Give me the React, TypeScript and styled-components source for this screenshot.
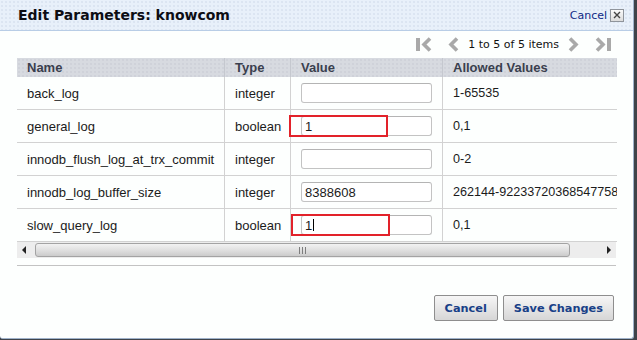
import React from 'react';
import styled, { createGlobalStyle } from 'styled-components';

const GlobalStyle = createGlobalStyle`
  html, body {
    margin: 0;
    padding: 0;
    background: #3f4349;
  }
  body {
    width: 637px;
    height: 340px;
    overflow: hidden;
  }
`;

const Dialog = styled.div`
  width: 634px;
  height: 339px;
  box-sizing: border-box;
  background: #fdfffe;
  border-right: 1px solid #9fb2ca;
  border-bottom: 1px solid #9fb2ca;
  border-bottom-left-radius: 3px;
  border-bottom-right-radius: 3px;
  display: flex;
  flex-direction: column;
  overflow: hidden;
`;

const Header = styled.div`
  height: 31px;
  box-sizing: border-box;
  display: flex;
  align-items: center;
  justify-content: space-between;
  padding: 0 9px 0 18px;
  background-color: #e8f0fa;
  background-image: radial-gradient(#dbe4f1 0.7px, transparent 0.8px);
  background-size: 4px 4px;
  border-bottom: 1px solid #b8cde6;
`;

const Title = styled.div`
  font-family: 'DejaVu Sans', Verdana, sans-serif;
  font-weight: bold;
  font-size: 14px;
  color: #0d0d14;
`;

const HeaderTools = styled.div`
  display: flex;
  align-items: center;
  gap: 3px;
`;

const CancelLink = styled.a`
  font-family: 'DejaVu Sans', Verdana, sans-serif;
  font-size: 11px;
  color: #102a86;
  text-decoration: none;
`;

const CloseBox = styled.span`
  width: 14px;
  height: 13px;
  box-sizing: border-box;
  border: 1px solid #8f949b;
  background: linear-gradient(#fafafa, #dcdcdc);
  display: flex;
  align-items: center;
  justify-content: center;
`;

const Body = styled.div`
  padding: 0 17px;
  display: flex;
  flex-direction: column;
`;

const Pager = styled.div`
  height: 27px;
  display: flex;
  align-items: center;
  justify-content: flex-end;
  gap: 9px;
  padding-right: 5px;
`;

const PagerIcon = styled.svg<{ $outer?: 'left' | 'right' }>`
  display: block;
  margin-left: ${(p) => (p.$outer === 'right' ? '7px' : '0')};
  margin-right: ${(p) => (p.$outer === 'left' ? '7px' : '0')};
`;

const PagerLabel = styled.span`
  font-family: 'DejaVu Sans', Verdana, sans-serif;
  font-size: 11px;
  color: #111;
`;

const Viewport = styled.div`
  width: 600px;
  overflow: hidden;
`;

const Grid = styled.table`
  width: 642px;
  table-layout: fixed;
  border-collapse: separate;
  border-spacing: 0;
  font-family: 'Liberation Sans', Arial, sans-serif;
  font-size: 13px;
  color: #1b1b1b;
`;

const HeadCell = styled.th<{ $first?: boolean }>`
  height: 19px;
  padding: 0 10px;
  text-align: left;
  font-weight: bold;
  color: #3a3f4e;
  white-space: nowrap;
  background-color: #d7dae0;
  background-image: radial-gradient(#cfd2d9 0.7px, transparent 0.8px);
  background-size: 4px 4px;
  border-left: ${(p) => (p.$first ? 'none' : '1px solid #c5c8cf')};
`;

const Cell = styled.td<{ $first?: boolean; $tight?: boolean }>`
  height: 32px;
  padding: 0 10px;
  white-space: nowrap;
  vertical-align: middle;
  font-size: ${(p) => (p.$tight ? '12.6px' : '13px')};
  border-bottom: 1px solid #d2d2d2;
  border-left: ${(p) => (p.$first ? 'none' : '1px solid #d2d2d2')};
`;

const FieldWrap = styled.span`
  position: relative;
  display: inline-block;
  vertical-align: middle;
`;

const Field = styled.span`
  display: flex;
  align-items: center;
  width: 131px;
  height: 20px;
  box-sizing: border-box;
  padding: 0 3px;
  border: 1px solid #c3c3c3;
  border-top-color: #b4b4b4;
  border-radius: 3px;
  background: #fff;
  font-size: 13px;
`;

const Caret = styled.span`
  display: inline-block;
  width: 1px;
  height: 12px;
  margin-left: 1px;
  background: #000;
`;

const Highlight = styled.span<{ $left: number }>`
  position: absolute;
  left: ${(p) => p.$left}px;
  top: -1px;
  width: 99px;
  height: 22px;
  box-sizing: border-box;
  border: 2px solid #e2222a;
  pointer-events: none;
`;

const ScrollBar = styled.div`
  height: 16px;
  display: flex;
  align-items: stretch;
  background: #ededed;
`;

const ScrollButton = styled.div<{ $dir: 'left' | 'right' }>`
  width: 18px;
  display: flex;
  align-items: center;
  justify-content: center;
  &::before {
    content: '';
    width: 0;
    height: 0;
    border-top: 4px solid transparent;
    border-bottom: 4px solid transparent;
    ${(p) =>
      p.$dir === 'left'
        ? 'border-right: 4px solid #222; margin-right: 4px;'
        : 'border-left: 4px solid #222; margin-left: 4px;'}
  }
`;

const Thumb = styled.div`
  width: 535px;
  margin: 1px 0;
  box-sizing: border-box;
  border: 1px solid #a3a3a3;
  border-radius: 3px;
  background: linear-gradient(#f2f2f2, #e0e0e0 50%, #cbcbcb);
  display: flex;
  align-items: center;
  justify-content: center;
  gap: 2px;
`;

const Grip = styled.span`
  width: 1px;
  height: 7px;
  background: #7d7d7d;
`;

const Track = styled.div`
  flex: 1;
`;

const Rule = styled.div`
  margin-top: 7px;
  border-top: 1px solid #c3c3c3;
`;

const Footer = styled.div`
  margin-top: 29px;
  padding-right: 19px;
  display: flex;
  justify-content: flex-end;
  gap: 5px;
`;

const Button = styled.button`
  height: 26px;
  padding: 0 10px;
  border: 1px solid #8e8e8e;
  border-radius: 2px;
  background: linear-gradient(#f6f6f6, #e6e6e6 50%, #d6d6d6);
  font-family: 'DejaVu Sans', Verdana, sans-serif;
  font-weight: bold;
  font-size: 11.3px;
  color: #183f87;
  cursor: pointer;
`;

type Param = {
  name: string;
  type: string;
  value: string;
  allowed: string;
  mark?: number;
  caret?: boolean;
};

const params: Param[] = [
  { name: 'back_log', type: 'integer', value: '', allowed: '1-65535' },
  { name: 'general_log', type: 'boolean', value: '1', allowed: '0,1', mark: -12 },
  { name: 'innodb_flush_log_at_trx_commit', type: 'integer', value: '', allowed: '0-2' },
  { name: 'innodb_log_buffer_size', type: 'integer', value: '8388608', allowed: '262144-92233720368547758' },
  { name: 'slow_query_log', type: 'boolean', value: '1', allowed: '0,1', mark: -10, caret: true },
];

const GREY = '#a9a9a9';

const Chevron: React.FC<{ dir: 'left' | 'right'; bar?: boolean; outer?: 'left' | 'right' }> = ({ dir, bar, outer }) => {
  const w = bar ? 16 : 11;
  const left = dir === 'left';
  const off = bar && left ? 6 : 1;
  const pts = left
    ? `${off + 8},1.5 ${off + 2},7.5 ${off + 8},13.5`
    : `${off + 1},1.5 ${off + 7},7.5 ${off + 1},13.5`;
  return (
    <PagerIcon $outer={outer} width={w} height={15} viewBox={`0 0 ${w} 15`}>
      {bar && <rect x={left ? 0 : 12} y={1} width={4} height={13} fill={GREY} />}
      <polyline points={pts} fill="none" stroke={GREY} strokeWidth={3.6} />
    </PagerIcon>
  );
};

const App: React.FC = () => {
  return (
    <>
      <GlobalStyle />
      <Dialog>
        <Header>
          <Title>Edit Parameters: knowcom</Title>
          <HeaderTools>
            <CancelLink href="#">Cancel</CancelLink>
            <CloseBox>
              <svg width="8" height="8" viewBox="0 0 8 8">
                <path d="M1 1 L7 7 M7 1 L1 7" stroke="#444" strokeWidth="1.4" />
              </svg>
            </CloseBox>
          </HeaderTools>
        </Header>
        <Body>
          <Pager>
            <Chevron dir="left" bar outer="left" />
            <Chevron dir="left" />
            <PagerLabel>1 to 5 of 5 items</PagerLabel>
            <Chevron dir="right" />
            <Chevron dir="right" bar outer="right" />
          </Pager>
          <Viewport>
            <Grid>
              <colgroup>
                <col style={{ width: 207 }} />
                <col style={{ width: 66 }} />
                <col style={{ width: 152 }} />
                <col style={{ width: 217 }} />
              </colgroup>
              <thead>
                <tr>
                  <HeadCell $first>Name</HeadCell>
                  <HeadCell>Type</HeadCell>
                  <HeadCell>Value</HeadCell>
                  <HeadCell>Allowed Values</HeadCell>
                </tr>
              </thead>
              <tbody>
                {params.map((p) => (
                  <tr key={p.name}>
                    <Cell $first>{p.name}</Cell>
                    <Cell>{p.type}</Cell>
                    <Cell>
                      <FieldWrap>
                        <Field>
                          {p.value}
                          {p.caret && <Caret />}
                        </Field>
                        {p.mark !== undefined && <Highlight $left={p.mark} />}
                      </FieldWrap>
                    </Cell>
                    <Cell $tight>{p.allowed}</Cell>
                  </tr>
                ))}
              </tbody>
            </Grid>
          </Viewport>
          <ScrollBar>
            <ScrollButton $dir="left" />
            <Thumb>
              <Grip />
              <Grip />
              <Grip />
            </Thumb>
            <Track />
            <ScrollButton $dir="right" />
          </ScrollBar>
          <Rule />
        </Body>
        <Footer>
          <Button>Cancel</Button>
          <Button>Save Changes</Button>
        </Footer>
      </Dialog>
    </>
  );
};

export default App;
